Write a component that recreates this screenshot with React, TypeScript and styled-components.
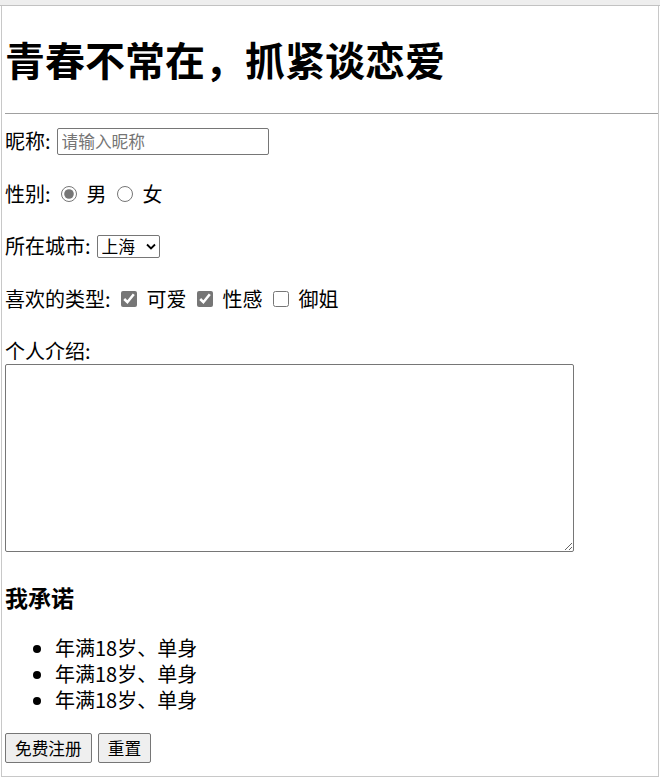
import React from "react";
import styled, { createGlobalStyle } from "styled-components";

const GlobalStyle = createGlobalStyle`
  html, body {
    margin: 0;
    padding: 0;
    background: #ffffff;
  }
  body {
    font-family: "Noto Sans CJK SC", "Microsoft YaHei", sans-serif;
    font-size: 20px;
    color: #000000;
  }
`;

const Window = styled.div`
  width: 660px;
  height: 779px;
  overflow: hidden;
  background: #ffffff;
`;

const TopBar = styled.div`
  height: 5px;
  background: #eeeeee;
  border-bottom: 1px solid #c2c2c2;
`;

const Frame = styled.div`
  margin-left: 1px;
  width: 658px;
  height: 771px;
  box-sizing: border-box;
  border: 1px solid #c8c8c8;
  border-top: none;
  padding-left: 3px;
  overflow: hidden;
`;

const Title = styled.h1`
  margin: 27px 0 0;
  font-size: 40px;
  line-height: 53px;
  font-weight: 700;
`;

const Divider = styled.hr`
  margin: 27px 0 0;
  height: 0;
  border: 0;
  border-top: 1px solid #a0a0a0;
`;

const Form = styled.form`
  display: flex;
  flex-direction: column;
  padding-top: 14px;
`;

const Row = styled.div<{ $tight?: boolean }>`
  display: flex;
  align-items: center;
  height: 26px;
  line-height: 26px;
  white-space: nowrap;
  margin-bottom: ${(p) => (p.$tight ? "0" : "26.5px")};
`;

const TextInput = styled.input`
  margin: 0 0 0 6px;
  width: 212px;
  height: 27px;
  box-sizing: border-box;
  padding: 1px 4px;
  border: 1px solid #767676;
  border-radius: 2px;
  font-family: "Noto Sans CJK SC", sans-serif;
  font-size: 16.7px;
  color: #000;
  &::placeholder {
    color: #757575;
  }
`;

const Choice = styled.input`
  width: 16px;
  height: 16px;
  margin: 0 10px;
  accent-color: #767676;
`;

const SelectWrap = styled.span`
  position: relative;
  display: inline-flex;
  margin-left: 6px;
`;

const CitySelect = styled.select`
  appearance: none;
  width: 63px;
  height: 23px;
  box-sizing: border-box;
  border: 1px solid #767676;
  border-radius: 2px;
  background: #ffffff;
  font-family: "Noto Sans CJK SC", sans-serif;
  font-size: 16.7px;
  line-height: 21px;
  color: #000;
  padding: 0 0 0 4px;
`;

const Chevron = styled.svg`
  position: absolute;
  right: 4px;
  top: 8px;
  width: 10px;
  height: 7px;
  pointer-events: none;
`;

const Intro = styled.textarea`
  display: block;
  margin: 0;
  width: 569px;
  height: 188px;
  box-sizing: border-box;
  border: 1px solid #767676;
  border-radius: 2px;
  font-family: "Liberation Mono", monospace;
  font-size: 16px;
`;

const Promise = styled.h3`
  margin: 30px 0 0;
  font-size: 23px;
  line-height: 31px;
  font-weight: 700;
`;

const Terms = styled.ul`
  margin: 21.5px 0 20px;
  padding-left: 50px;
  line-height: 26px;
`;

const Buttons = styled.div`
  display: flex;
  gap: 6px;
`;

const Button = styled.button`
  height: 30px;
  padding: 0 9px;
  border: 1px solid #767676;
  border-radius: 2px;
  background: #efefef;
  font-family: "Noto Sans CJK SC", sans-serif;
  font-size: 16.7px;
  color: #000;
`;

const terms = ["年满18岁、单身", "年满18岁、单身", "年满18岁、单身"];

export default function App() {
  return (
    <Window>
      <GlobalStyle />
      <TopBar />
      <Frame>
        <Title>青春不常在，抓紧谈恋爱</Title>
        <Divider />
        <Form onSubmit={(e) => e.preventDefault()}>
          <Row>
            昵称:
            <TextInput type="text" placeholder="请输入昵称" />
          </Row>
          <Row>
            性别:
            <Choice type="radio" name="sex" defaultChecked />男
            <Choice type="radio" name="sex" />女
          </Row>
          <Row>
            所在城市:
            <SelectWrap>
              <CitySelect defaultValue="上海">
                <option>北京</option>
                <option>上海</option>
                <option>广州</option>
              </CitySelect>
              <Chevron viewBox="0 0 10 7">
                <path d="M1 1.5 L5 5.5 L9 1.5" fill="none" stroke="#000" strokeWidth="1.8" />
              </Chevron>
            </SelectWrap>
          </Row>
          <Row>
            喜欢的类型:
            <Choice type="checkbox" defaultChecked />可爱
            <Choice type="checkbox" defaultChecked />性感
            <Choice type="checkbox" />御姐
          </Row>
          <Row $tight>个人介绍:</Row>
          <Intro />
          <Promise>我承诺</Promise>
          <Terms>
            {terms.map((t, i) => (
              <li key={i}>{t}</li>
            ))}
          </Terms>
          <Buttons>
            <Button type="submit">免费注册</Button>
            <Button type="reset">重置</Button>
          </Buttons>
        </Form>
      </Frame>
    </Window>
  );
}
